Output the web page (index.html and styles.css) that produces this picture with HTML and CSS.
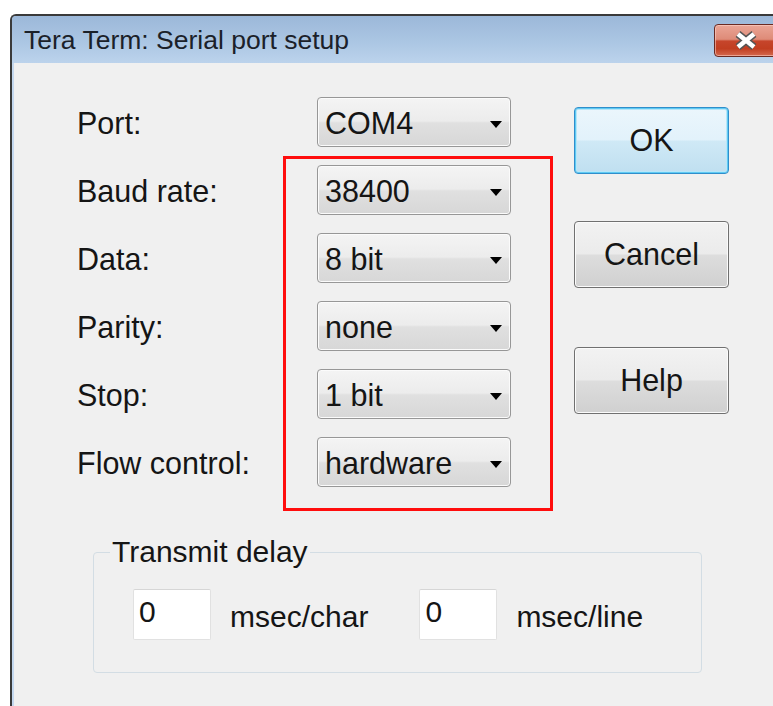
FILE: index.html
```html
<!DOCTYPE html>
<html lang="en">
<head>
<meta charset="utf-8">
<title>Tera Term: Serial port setup</title>
<link rel="stylesheet" href="styles.css">
</head>
<body>
<div class="window">
  <div class="titlebar">
    <span class="title">Tera Term: Serial port setup</span>
    <div class="close" role="button" aria-label="Close">
      <svg width="26" height="19" viewBox="0 0 26 19">
        <path d="M5 3 L21 16 M21 3 L5 16" stroke="#555" stroke-width="7.5" fill="none"/>
        <path d="M5 3 L21 16 M21 3 L5 16" stroke="#fff" stroke-width="4.5" fill="none"/>
      </svg>
    </div>
  </div>

  <div class="client">
    <div class="top">
      <div class="fields">
        <span class="label">Port:</span>
        <div class="combo"><span>COM4</span><i class="arrow"></i></div>
        <span class="label">Baud rate:</span>
        <div class="combo"><span>38400</span><i class="arrow"></i></div>
        <span class="label">Data:</span>
        <div class="combo"><span>8 bit</span><i class="arrow"></i></div>
        <span class="label">Parity:</span>
        <div class="combo"><span>none</span><i class="arrow"></i></div>
        <span class="label">Stop:</span>
        <div class="combo"><span>1 bit</span><i class="arrow"></i></div>
        <span class="label">Flow control:</span>
        <div class="combo"><span>hardware</span><i class="arrow"></i></div>
      </div>
      <div class="buttons">
        <div class="btn btn-default ok" role="button">OK</div>
        <div class="btn cancel" role="button">Cancel</div>
        <div class="btn help" role="button">Help</div>
      </div>
    </div>

    <fieldset class="group">
      <legend>Transmit delay</legend>
      <div class="delay-row">
        <div class="edit">0</div>
        <span class="unit">msec/char</span>
        <div class="edit edit-line">0</div>
        <span class="unit">msec/line</span>
      </div>
    </fieldset>

    <div class="highlight"></div>
  </div>
</div>
</body>
</html>
```

FILE: styles.css
```css
html, body {
  margin: 0;
  padding: 0;
}

body {
  width: 773px;
  height: 706px;
  overflow: hidden;
  background: #ffffff;
  font-family: "Liberation Sans", Arial, sans-serif;
  color: #151515;
}

/* dialog frame; its right and bottom edges sit outside the visible area */
.window {
  margin: 14px 0 0 10px;
  width: 761px;
  height: 690px;
  border-top: 2px solid #3a3a3a;
  border-left: 2px solid #3a3a3a;
  border-top-left-radius: 6px;
  overflow: hidden;
  display: flex;
  flex-direction: column;
  background: #bcd3ec;
}

.titlebar {
  height: 47px;
  flex: none;
  display: flex;
  align-items: center;
  padding-left: 12px;
  background: linear-gradient(#9cb8d9 0%, #abc6e3 55%, #bcd3ec 100%);
}

.title {
  font-size: 26.5px;
  padding-top: 2px;
  color: #1b2129;
  white-space: nowrap;
}

.close {
  flex: none;
  margin-left: auto;
  margin-right: -21px;
  align-self: flex-start;
  margin-top: 8px;
  width: 80px;
  height: 33px;
  box-sizing: border-box;
  border: 1px solid #6a2a22;
  border-radius: 4px;
  background: linear-gradient(#eaa596 0%, #de8b78 46%, #c6452b 52%, #c13e21 76%, #d4684e 100%);
  box-shadow: inset 0 0 0 1px rgba(255, 215, 205, 0.55);
  display: flex;
  align-items: center;
  padding-left: 18px;
}

.close svg {
  display: block;
}

/* dialog client area */
.client {
  flex: 1;
  position: relative;
  background: #f0f0f0;
  border-left: 2px solid #c4d8ef;
  padding: 34px 0 0 63px;
}

.top {
  display: flex;
  align-items: flex-start;
}

.fields {
  display: grid;
  grid-template-columns: 240px 194px;
  row-gap: 18px;
  align-items: center;
}

.label {
  font-size: 30.5px;
  padding-top: 3px;
  white-space: nowrap;
}

.combo {
  height: 50px;
  box-sizing: border-box;
  border: 1px solid #979797;
  border-radius: 4px;
  background: linear-gradient(#f4f4f4 0%, #ececec 48%, #e0e0e0 52%, #d7d7d7 100%);
  box-shadow: inset 0 0 0 1px #fbfbfb;
  display: flex;
  align-items: center;
  justify-content: space-between;
  padding: 0 8px 0 7px;
  font-size: 30.5px;
}

.combo span {
  padding-top: 3px;
}

.arrow {
  width: 0;
  height: 0;
  margin-top: 5px;
  border-left: 6.5px solid transparent;
  border-right: 6.5px solid transparent;
  border-top: 7px solid #000;
}

/* command buttons */
.buttons {
  margin-left: 63px;
  width: 155px;
  display: flex;
  flex-direction: column;
}

.btn {
  height: 67px;
  box-sizing: border-box;
  border: 1px solid #707070;
  border-radius: 4px;
  background: linear-gradient(#f2f2f2 0%, #ebebeb 49%, #dddddd 51%, #d0d0d0 100%);
  box-shadow: inset 0 0 0 1px #fbfbfb;
  display: flex;
  align-items: center;
  justify-content: center;
  font-size: 30.5px;
}

.btn-default {
  border: 1px solid #2f8ecb;
  background: linear-gradient(#ebf6fc 0%, #e2f2fb 49%, #cfe9f6 51%, #bfdff0 100%);
  box-shadow: inset 0 0 0 1px #5fcaf3, inset 0 0 0 2px #b7e6f9;
}

.ok {
  margin-top: 10px;
}

.cancel {
  margin-top: 47px;
}

.help {
  margin-top: 59px;
}

/* transmit delay group */
.group {
  margin: 47px 0 0 16px;
  width: 609px;
  box-sizing: border-box;
  border: 1px solid #d3dde4;
  border-radius: 4px;
  padding: 19px 0 32px 16px;
  min-width: 0;
}

.group legend {
  padding: 0 2px;
  font-size: 30px;
  line-height: 36px;
}

.delay-row {
  display: flex;
  align-items: center;
  padding-left: 23px;
}

.edit {
  width: 78px;
  height: 51px;
  box-sizing: border-box;
  background: #ffffff;
  border: 1px solid #e1e1e1;
  border-top-color: #d6d6d6;
  border-radius: 2px;
  font-size: 30px;
  line-height: 36px;
  padding: 4px 0 0 5px;
}

.unit {
  margin-left: 19px;
  font-size: 30px;
  padding-top: 4px;
}

.edit-line {
  margin-left: 51px;
}

/* red annotation frame around the serial parameters */
.highlight {
  position: absolute;
  left: 269px;
  top: 93px;
  width: 270px;
  height: 355px;
  box-sizing: border-box;
  border: 3px solid #ff0d0d;
}
```
